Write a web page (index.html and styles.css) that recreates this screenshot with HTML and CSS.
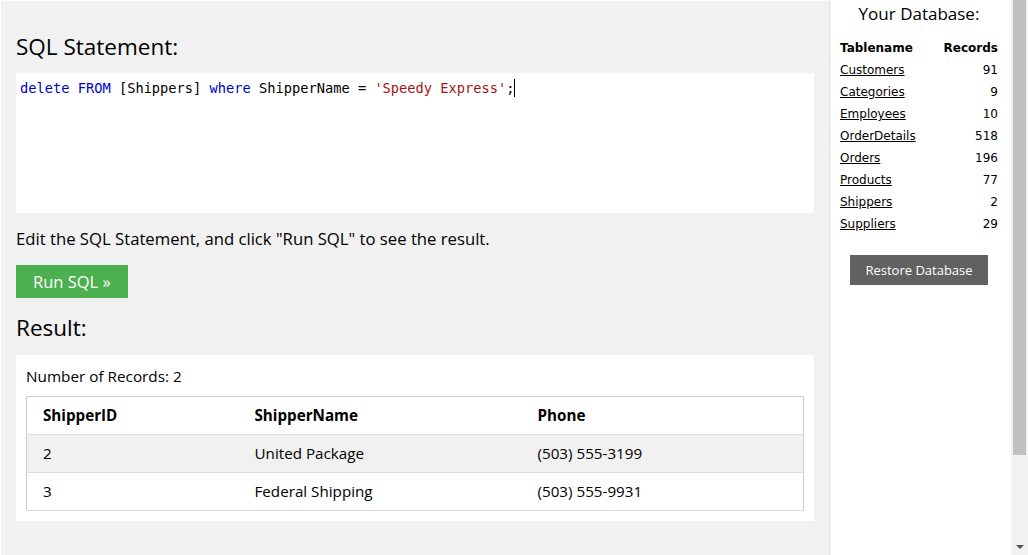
FILE: index.html
```html
<!DOCTYPE html>
<html>
<head>
<meta charset="utf-8">
<link rel="stylesheet" href="styles.css">
</head>
<body>
<div class="page">
  <main class="editor">
    <h2 class="title">SQL Statement:</h2>
    <div class="code"><span class="kw">delete</span> <span class="kw">FROM</span> [Shippers] <span class="kw">where</span> ShipperName = <span class="str">'Speedy Express'</span>;<span class="caret"></span></div>
    <p class="hint">Edit the SQL Statement, and click "Run SQL" to see the result.</p>
    <button class="run">Run SQL »</button>
    <h2 class="title result-title">Result:</h2>
    <div class="result">
      <div class="count">Number of Records: 2</div>
      <table class="grid">
        <colgroup><col class="c1"><col class="c2"><col class="c3"></colgroup>
        <tr><th>ShipperID</th><th>ShipperName</th><th>Phone</th></tr>
        <tr class="alt"><td>2</td><td>United Package</td><td>(503) 555-3199</td></tr>
        <tr><td>3</td><td>Federal Shipping</td><td>(503) 555-9931</td></tr>
      </table>
    </div>
  </main>
  <aside class="db">
    <h3 class="db-title">Your Database:</h3>
    <table class="db-table">
      <tr><th class="name">Tablename</th><th class="num">Records</th></tr>
      <tr><td><a href="#">Customers</a></td><td class="num">91</td></tr>
      <tr><td><a href="#">Categories</a></td><td class="num">9</td></tr>
      <tr><td><a href="#">Employees</a></td><td class="num">10</td></tr>
      <tr><td><a href="#">OrderDetails</a></td><td class="num">518</td></tr>
      <tr><td><a href="#">Orders</a></td><td class="num">196</td></tr>
      <tr><td><a href="#">Products</a></td><td class="num">77</td></tr>
      <tr><td><a href="#">Shippers</a></td><td class="num">2</td></tr>
      <tr><td><a href="#">Suppliers</a></td><td class="num">29</td></tr>
    </table>
    <div class="restore-wrap"><button class="restore">Restore Database</button></div>
  </aside>
  <div class="scrollbar">
    <div class="thumb"></div>
    <div class="arrow"></div>
  </div>
</div>
</body>
</html>
```

FILE: styles.css
```css
html, body {
  margin: 0;
  padding: 0;
  background: #ffffff;
}
body {
  font-family: "Open Sans", "Liberation Sans", sans-serif;
  color: #000;
}
.page {
  display: flex;
  height: 555px;
  overflow: hidden;
}
.editor {
  box-sizing: border-box;
  width: 829px;
  margin: 1px 0 0 1px;
  padding: 31px 15px 0 15px;
  background: #f1f1f1;
  border-right: 1px solid #e2e2e2;
  box-shadow: 1px 0 0 #f2f2f2;
  flex: none;
}
.title {
  margin: 0 0 11px 0;
  font-size: 22.5px;
  line-height: 30px;
  font-weight: 400;
}
.result-title {
  margin-bottom: 12px;
}
.code {
  box-sizing: border-box;
  height: 140px;
  background: #fff;
  padding: 6px 4px 0 4px;
  font-family: "DejaVu Sans Mono", "Liberation Mono", monospace;
  font-size: 13.7px;
  line-height: 18px;
  white-space: pre;
  color: #000;
}
.kw { color: #0000cd; }
.str { color: #a31515; }
.caret {
  display: inline-block;
  width: 1px;
  height: 18px;
  background: #000;
  vertical-align: top;
}
.hint {
  margin: 16px 0 16px 0;
  font-size: 16.7px;
  line-height: 20px;
}
.run {
  display: block;
  height: 33px;
  padding: 0 17px;
  border: 0;
  background: #4caf50;
  color: #fff;
  font-family: inherit;
  font-size: 16.5px;
  margin-bottom: 15px;
}
.result {
  background: #fff;
  padding: 11px 10px 10px 10px;
}
.count {
  font-size: 15.3px;
  line-height: 20px;
  margin-bottom: 10px;
}
.grid {
  width: 100%;
  border-collapse: collapse;
  table-layout: fixed;
  border: 1px solid #cccccc;
  font-size: 15.2px;
  line-height: 21px;
}
.grid .c1 { width: 212px; }
.grid .c2 { width: 283px; }
.grid th, .grid td {
  text-align: left;
  padding: 8px 16px;
  border-bottom: 1px solid #dddddd;
}
.grid th { font-weight: 700; }
.grid .alt { background: #f1f1f1; }

.db {
  flex: 1;
  box-sizing: border-box;
  padding: 0 13px 0 9px;
  background: #fff;
  margin-left: 1px;
}
.db-title {
  margin: 2px 0 11px 0;
  text-align: center;
  font-size: 17px;
  line-height: 24px;
  font-weight: 400;
  color: #000;
}
.db-table {
  width: 100%;
  border-collapse: collapse;
  font-family: "DejaVu Sans", Verdana, sans-serif;
  font-size: 12px;
}
.db-table th, .db-table td {
  padding: 0;
  height: 22px;
  line-height: 22px;
  text-align: left;
}
.db-table .num { text-align: right; }
.db-table a { color: #000; text-decoration: underline; }
.restore-wrap {
  display: flex;
  justify-content: center;
  margin-top: 20px;
}
.restore {
  width: 138px;
  height: 30px;
  border: 0;
  background: #616161;
  color: #fff;
  font-family: "Open Sans", sans-serif;
  font-size: 13px;
  padding: 0;
}
.scrollbar {
  width: 17px;
  flex: none;
  background: #f1f1f1;
  display: flex;
  flex-direction: column;
  align-items: center;
}
.thumb {
  width: 13px;
  height: 455px;
  background: #c1c1c1;
}
.arrow {
  margin-top: auto;
  margin-bottom: 6px;
  width: 0;
  height: 0;
  border-left: 4px solid transparent;
  border-right: 4px solid transparent;
  border-top: 4px solid #505050;
}
```
